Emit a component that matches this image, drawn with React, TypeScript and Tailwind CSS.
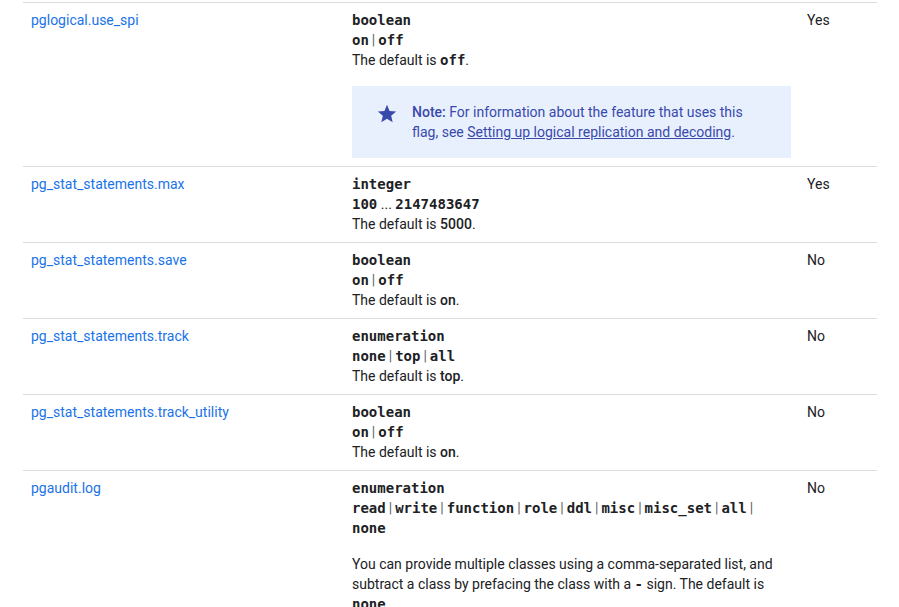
import type { ReactNode } from 'react';

const mono = "font-['DejaVu_Sans_Mono',monospace] font-bold text-[14px] text-[#202124]";

function Code({ children }: { children: ReactNode }) {
  return <code className={mono}>{children}</code>;
}

function Pipe() {
  return <span className="mx-[3px] text-[#5f6368]">|</span>;
}

function Options({ items }: { items: string[] }) {
  return (
    <div>
      {items.map((item, i) => (
        <span key={item}>
          {i > 0 && <Pipe />}
          <Code>{item}</Code>
        </span>
      ))}
    </div>
  );
}

type Flag = {
  name: string
  restart: string
  body: ReactNode
}

function StarIcon() {
  return (
    <svg viewBox="0 0 24 24" className="size-[22px] shrink-0 fill-[#3949ab]">
      <path d="M12 17.27 18.18 21l-1.64-7.03L22 9.24l-7.19-.61L12 2 9.19 8.63 2 9.24l5.46 4.73L5.82 21z" />
    </svg>
  );
}

const flags: Flag[] = [
  {
    name: 'pglogical.use_spi',
    restart: 'Yes',
    body: (
      <>
        <Code>boolean</Code>
        <Options items={['on', 'off']} />
        <div>
          The default is <Code>off</Code>.
        </div>
        <div className="mt-4 flex gap-[14px] bg-[#e8f0fe] py-4 pl-6 pr-6 text-[#3949ab]">
          <div className="pt-[1px]">
            <StarIcon />
          </div>
          <p>
            <span className="font-medium">Note:</span> For information about the feature that uses this
            <br />
            flag, see <a className="underline">Setting up logical replication and decoding</a>.
          </p>
        </div>
      </>
    ),
  },
  {
    name: 'pg_stat_statements.max',
    restart: 'Yes',
    body: (
      <>
        <Code>integer</Code>
        <div>
          <Code>100</Code> ... <Code>2147483647</Code>
        </div>
        <div>
          The default is <span className="font-medium">5000</span>.
        </div>
      </>
    ),
  },
  {
    name: 'pg_stat_statements.save',
    restart: 'No',
    body: (
      <>
        <Code>boolean</Code>
        <Options items={['on', 'off']} />
        <div>
          The default is <span className="font-medium">on</span>.
        </div>
      </>
    ),
  },
  {
    name: 'pg_stat_statements.track',
    restart: 'No',
    body: (
      <>
        <Code>enumeration</Code>
        <Options items={['none', 'top', 'all']} />
        <div>
          The default is <span className="font-medium">top</span>.
        </div>
      </>
    ),
  },
  {
    name: 'pg_stat_statements.track_utility',
    restart: 'No',
    body: (
      <>
        <Code>boolean</Code>
        <Options items={['on', 'off']} />
        <div>
          The default is <span className="font-medium">on</span>.
        </div>
      </>
    ),
  },
  {
    name: 'pgaudit.log',
    restart: 'No',
    body: (
      <>
        <Code>enumeration</Code>
        <div>
          {['read', 'write', 'function', 'role', 'ddl', 'misc', 'misc_set', 'all'].map((item, i) => (
            <span key={item}>
              {i > 0 && <Pipe />}
              <Code>{item}</Code>
            </span>
          ))}
          <Pipe />
          <br />
          <Code>none</Code>
        </div>
        <p className="mt-4">
          You can provide multiple classes using a comma-separated list, and
          <br />
          subtract a class by prefacing the class with a <Code>-</Code> sign. The default is
          <br />
          <Code>none</Code>.
        </p>
      </>
    ),
  },
];

export default function App() {
  return (
    <div className="h-[607px] overflow-hidden bg-white pt-[2px] font-['Roboto',sans-serif] text-[14px] leading-5 text-[#202124]">
      <div className="ml-[23px] w-[854px]">
        {flags.map((flag) => (
          <div
            key={flag.name}
            className="grid grid-cols-[321px_455px_78px] border-t border-[#dadce0] last:border-b"
          >
            <div className="px-2 pt-[7px] pb-2">
              <a className="text-[#1a73e8]">{flag.name}</a>
            </div>
            <div className="flex flex-col px-2 pt-[7px] pb-2">{flag.body}</div>
            <div className="px-2 pt-[7px] pb-2">{flag.restart}</div>
          </div>
        ))}
      </div>
    </div>
  );
}
